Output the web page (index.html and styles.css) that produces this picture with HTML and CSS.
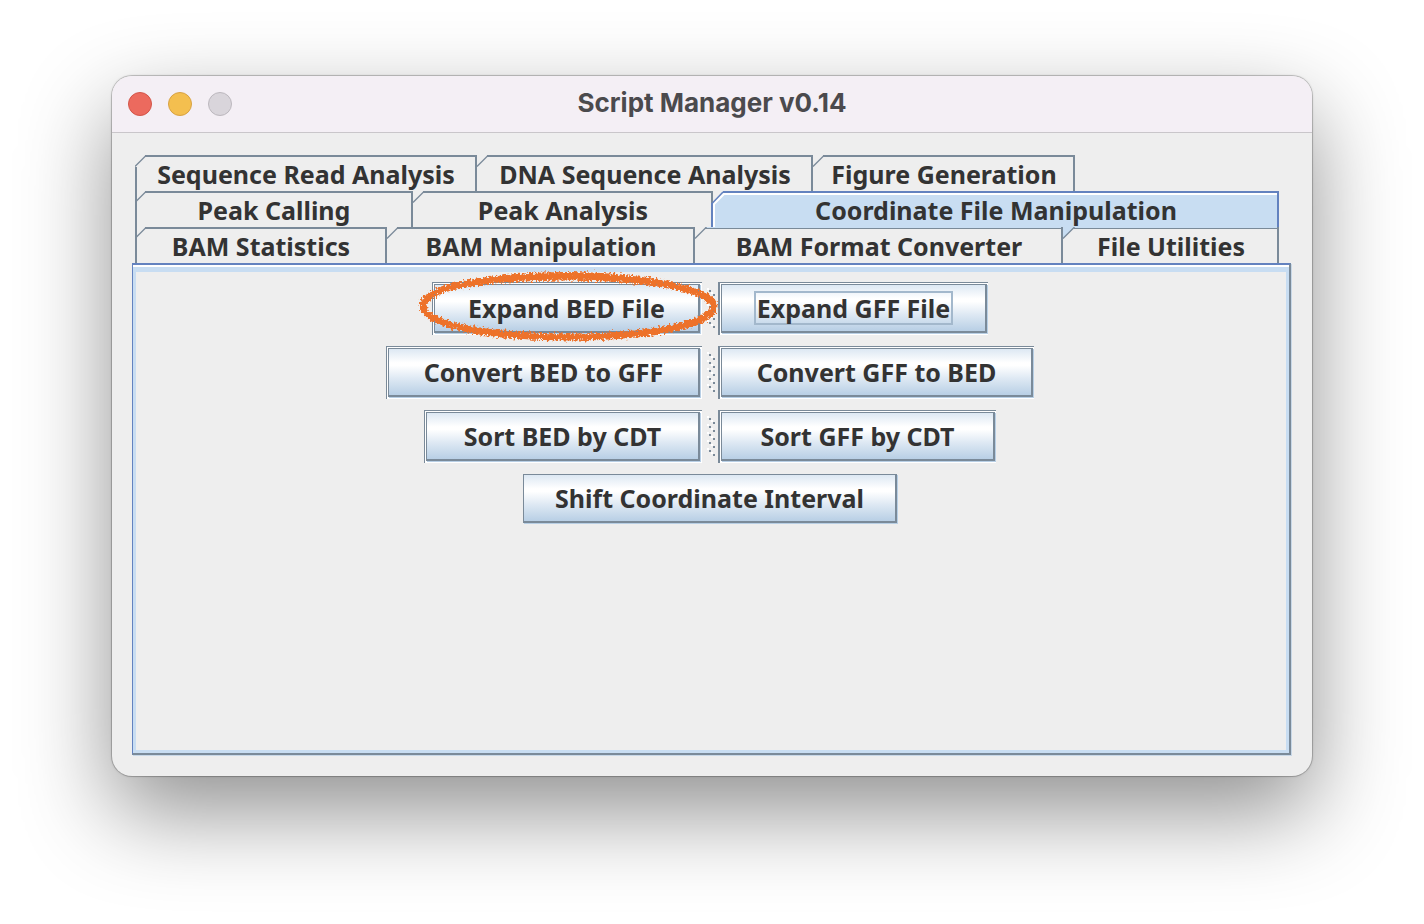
FILE: index.html
```html
<!DOCTYPE html>
<html lang="en">
<head>
<meta charset="utf-8">
<title>Script Manager v0.14</title>
<link rel="stylesheet" href="styles.css">
</head>
<body>
<svg class="defs" width="0" height="0" aria-hidden="true">
  <symbol id="notch" viewBox="0 0 12 12"><path d="M0 11.5 11.5 0" fill="none" stroke="currentColor" stroke-width="1.3"/></symbol>
  <symbol id="grip" viewBox="0 0 8 40">
    <g id="grip-step"><path d="M0 0h2v2H0zM4 4h2v2H4z" fill="#fff"/><path d="M2 2h2v2H2zM6 6h2v2H6z" fill="#7a8a99"/></g>
    <use href="#grip-step" y="8"/><use href="#grip-step" y="16"/><use href="#grip-step" y="24"/><use href="#grip-step" y="32"/>
  </symbol>
</svg>
<main class="window">
  <header class="titlebar">
    <div class="lights">
      <button class="light close" aria-label="Close"></button>
      <button class="light minimize" aria-label="Minimize"></button>
      <button class="light zoom" aria-label="Zoom" disabled></button>
    </div>
    <h1>Script Manager v0.14</h1>
  </header>
  <div class="content">
    <div class="tabs" role="tablist">
      <div class="tab-row row-top">
        <button class="tab" role="tab"><svg class="notch"><use href="#notch"/></svg>Sequence Read Analysis</button>
        <button class="tab" role="tab"><svg class="notch"><use href="#notch"/></svg>DNA Sequence Analysis</button>
        <button class="tab" role="tab"><svg class="notch"><use href="#notch"/></svg>Figure Generation</button>
      </div>
      <div class="tab-row row-middle">
        <button class="tab" role="tab"><svg class="notch"><use href="#notch"/></svg>Peak Calling</button>
        <button class="tab" role="tab"><svg class="notch"><use href="#notch"/></svg>Peak Analysis</button>
        <button class="tab selected" role="tab" aria-selected="true"><svg class="selected-edge" viewBox="0 0 14 37"><path d="M2 37V12.5L12.500 2H14V37z" fill="#c8ddf2"/><path d="M3 37V13L13 3h1" fill="none" stroke="#fff" stroke-width="2"/><path d="M1 36V12.500L12 1" fill="none" stroke="#6382bf" stroke-width="1.500"/><path d="M1 36V12" stroke="#6382bf" stroke-width="2"/></svg>Coordinate File Manipulation</button>
      </div>
      <div class="tab-row row-bottom">
        <button class="tab" role="tab"><svg class="notch"><use href="#notch"/></svg>BAM Statistics</button>
        <button class="tab" role="tab"><svg class="notch"><use href="#notch"/></svg>BAM Manipulation</button>
        <button class="tab" role="tab"><svg class="notch"><use href="#notch"/></svg>BAM Format Converter</button>
        <button class="tab" role="tab"><svg class="notch" viewBox="0 0 12 12"><path d="M0 0h12L0 12z" fill="#c8ddf2"/><path d="M0 11.500 11.500 0" fill="none" stroke="currentColor" stroke-width="1.300"/></svg>File Utilities</button>
      </div>
    </div>
    <section class="panel" role="tabpanel">
      <div class="split expand">
        <div class="side marked">
          <button class="action">Expand BED File</button>
          <svg class="marker" viewBox="0 0 304 76" aria-hidden="true">
            <defs><filter id="crayon" x="-5%" y="-10%" width="110%" height="120%"><feTurbulence type="fractalNoise" baseFrequency="0.45" numOctaves="3" seed="8" result="n"/><feDisplacementMap in="SourceGraphic" in2="n" scale="8" xChannelSelector="R" yChannelSelector="G"/></filter></defs>
            <g filter="url(#crayon)" fill="none" stroke="#ed722b">
              <path d="M7 37C7 18 66 8 152 8 236 8 298 22 298 37 298 55 236 68 154 68 70 68 7 55 7 37z" stroke-width="7"/>
              <path d="M10 32C20 16 80 5 152 5 220 5 280 17 296 35M8 41C20 59 90 70 154 69 230 68 284 55 296 40" stroke-width="4"/>
            </g>
          </svg>
        </div>
        <div class="divider" role="separator"><svg class="grip"><use href="#grip"/></svg></div>
        <div class="side right"><button class="action focused"><span>Expand GFF File</span></button></div>
      </div>
      <div class="split convert">
        <div class="side"><button class="action">Convert BED to GFF</button></div>
        <div class="divider" role="separator"><svg class="grip"><use href="#grip"/></svg></div>
        <div class="side right"><button class="action">Convert GFF to BED</button></div>
      </div>
      <div class="split sort">
        <div class="side"><button class="action">Sort BED by CDT</button></div>
        <div class="divider" role="separator"><svg class="grip"><use href="#grip"/></svg></div>
        <div class="side right"><button class="action">Sort GFF by CDT</button></div>
      </div>
      <button class="action shift">Shift Coordinate Interval</button>
    </section>
  </div>
</main>
</body>
</html>
```
FILE: styles.css
```css
* { box-sizing: border-box; }
body {
  margin: 0;
  min-height: 100vh;
  padding: 76px 112px 148px;
  display: flex;
  background: #fff;
  color: #333;
  font: 700 25px/32px "Noto Sans", "Open Sans", sans-serif;
}
button { margin: 0; padding: 0; border: 0; background: none; color: inherit; font: inherit; white-space: nowrap; }
.defs { position: absolute; }
.window {
  flex: 1;
  min-width: 0;
  display: flex;
  flex-direction: column;
  border-radius: 20px;
  background: #eee;
  box-shadow: 0 0 0 1px rgba(0, 0, 0, .17), 0 0 3px rgba(0, 0, 0, .2), 0 36px 90px rgba(0, 0, 0, .44);
}
.titlebar {
  display: grid;
  grid-template-columns: 1fr auto 1fr;
  align-items: center;
  height: 57px;
  padding: 0 16px;
  border-bottom: 1px solid #c9c6ca;
  border-radius: 20px 20px 0 0;
  background: #f4eff5;
}
.lights { display: flex; gap: 16px; }
.light { width: 24px; height: 24px; border: 1px solid; border-radius: 50%; }
.close { background: #ec6a5e; border-color: #d35549; }
.minimize { background: #f4bf4f; border-color: #d8a243; }
.zoom { background: #d9d5db; border-color: #bcb8be; }
h1 { margin: 0; padding-bottom: 2px; color: #4b4a4d; font: 700 26px/32px Inter, sans-serif; }
.content { flex: 1; display: flex; flex-direction: column; padding: 22px 21px 21px 20px; }
.tabs { padding: 0 12px 0 3px; }
.tab-row { display: grid; height: 36px; }
.row-top { grid-template-columns: 342fr 336fr 262fr 204fr; }
.row-middle { grid-template-columns: 278fr 300fr 566fr; }
.row-bottom { grid-template-columns: 252fr 308fr 368fr 216fr; }
.tab {
  position: relative;
  padding: 2px 0 0 2px;
  border-right: 2px solid #7a8a99;
  background: linear-gradient(#7a8a99, #7a8a99) 10px 0 / 100% 2px no-repeat;
}
.tab:first-child::before { content: ""; position: absolute; left: 0; top: 0; bottom: 0; width: 2px; background: #7a8a99; }
.row-top .tab:first-child::before { top: 12px; }
.notch { position: absolute; left: 0; top: 0; width: 12px; height: 12px; color: #7a8a99; }
.tab.selected {
  border-right-color: #6382bf;
  background: linear-gradient(#6382bf 2px, #fff 2px 4px, #c8ddf2 4px) 10px 0 / 100% 100% no-repeat;
}
.selected-edge { position: absolute; left: -2px; top: 0; width: 14px; height: 37px; }
.row-bottom .tab:nth-child(n+3) { background-image: linear-gradient(#c8ddf2 1px, #7a8a99 1px); }
.panel {
  flex: 1;
  display: flex;
  flex-direction: column;
  align-items: center;
  gap: 11px;
  padding: 17px 2px 16px 0;
  border: solid #6382bf;
  border-width: 2px 2px 2px 1px;
  border-right-color: #7a8a99;
  border-bottom-color: #7a8a99;
  box-shadow: inset 0 2px #fff, inset 0 7px #c8ddf2, inset 3px 0 #c8ddf2, inset -3px -3px #c8ddf2, 1px 1px #c8d8e8;
}
.split { display: flex; }
.side { position: relative; padding: 1px 2px 2px 1px; border: solid #7a8a99; border-width: 1px 0 0 1px; background: #fff; }
.side.right { padding-right: 1px; border-left-width: 2px; }
.side.marked { z-index: 1; }
.divider { width: 16px; padding: 6px 0 0 5px; }
.grip { display: block; width: 8px; height: 40px; }
.action {
  display: block;
  height: 49px;
  padding: 0 31px;
  border: solid #7a8a99;
  border-width: 1px 2px 2px 1px;
  background: linear-gradient(#dde8f3, #fff 30%, #fff 36%, #dde8f3 65%, #b8cfe5);
  box-shadow: 1px 1px #b8cfe5;
}
.expand .action { min-width: 266px; }
.convert .action { min-width: 312px; }
.sort .action { min-width: 274px; }
.shift { min-width: 372px; }
.focused { padding: 0; }
.focused span { display: inline-block; padding: 0 1px; border: 2px solid #a3b8cc; line-height: 30px; }
.marker { position: absolute; left: -17px; top: -14px; width: 304px; height: 76px; overflow: visible; pointer-events: none; }
```
